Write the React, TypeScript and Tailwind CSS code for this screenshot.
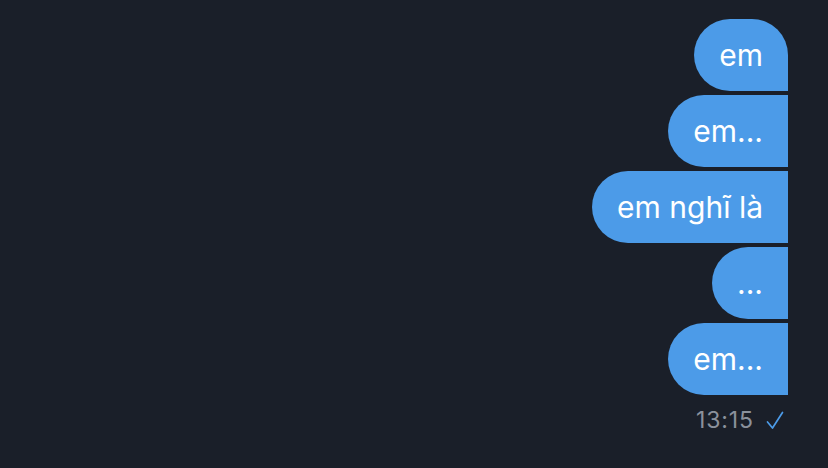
import React from 'react';

const messages = ['em', 'em...', 'em nghĩ là', '...', 'em...'];

export default function App() {
  return (
    <div
      className="w-[828px] h-[468px] bg-[#1a1f29] overflow-hidden"
      style={{ fontFamily: 'Inter, "Noto Sans", sans-serif' }}
    >
      <div className="flex flex-col items-end pt-[19px] pr-[40px] gap-[4px]">
        {messages.map((m, i) => (
          <div
            key={i}
            className={
              'h-[72px] flex items-center pl-[25px] pr-[25px] bg-[#4c9be8] text-white text-[30px] rounded-l-[36px] ' +
              (i === 0 ? 'rounded-tr-[36px]' : '')
            }
          >
            {m}
          </div>
        ))}
        <div className="flex items-center gap-[12px] mt-[4px] mr-[4px] text-[23px] tracking-[0.04em] text-[#8b919c]">
          <span>13:15</span>
          <svg width="18" height="19" viewBox="0 0 18 19" fill="none">
            <path d="M1.5 11 L6.5 17 L16.5 1.5" stroke="#4c9be8" strokeWidth="1.7" strokeLinecap="round" strokeLinejoin="round" />
          </svg>
        </div>
      </div>
    </div>
  );
}
